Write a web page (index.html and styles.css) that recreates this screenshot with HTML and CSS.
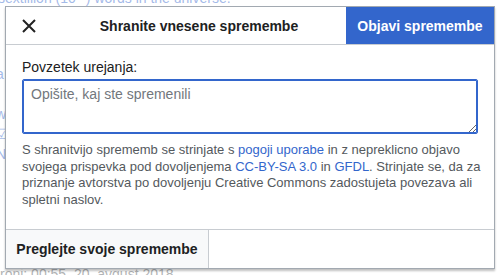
FILE: index.html
```html
<!DOCTYPE html>
<html lang="sl">
<head>
  <meta charset="UTF-8">
  <title>Shranite vnesene spremembe</title>
  <link rel="stylesheet" href="styles.css">
</head>
<body>
  <div class="stran">
    <p class="vrh">sextillion (10<sup>21</sup>) words in the universe.<sup>[ a ]</sup></p>
    <p class="levo">a<br>t<br>w<br>&#9745;<br>N</p>
    <p class="dno">roni: 00:55, 20. avgust 2018</p>
  </div>
  <div class="zavesa"></div>

  <div class="okno">
    <div class="glava">
      <button class="zapri" aria-label="Zapri">
        <svg width="14" height="14" viewBox="0 0 14 14"><path d="M1 1 L13 13 M13 1 L1 13" stroke="#222" stroke-width="2" fill="none"/></svg>
      </button>
      <div class="naslov">Shranite vnesene spremembe</div>
      <button class="objavi">Objavi spremembe</button>
    </div>

    <div class="vsebina">
      <label class="oznaka" for="povzetek">Povzetek urejanja:</label>
      <textarea id="povzetek" class="povzetek" placeholder="Opišite, kaj ste spremenili"></textarea>
      <p class="pogoji">S shranitvijo sprememb se strinjate s <a href="#">pogoji uporabe</a> in z nepreklicno objavo svojega prispevka pod dovoljenjema <a href="#">CC-BY-SA 3.0</a> in <a href="#">GFDL</a>. Strinjate se, da za priznanje avtorstva po dovoljenju Creative Commons zadostujeta povezava ali spletni naslov.</p>
    </div>

    <div class="noga">
      <button class="preglej">Preglejte svoje spremembe</button>
    </div>
  </div>
</body>
</html>
```

FILE: styles.css
```css
body {
  margin: 0;
  font-family: "Liberation Sans", Arial, sans-serif;
  background-color: white;
  width: 500px;
  height: 275px;
  overflow: hidden;
}
.stran {
  color: #202122;
  font-size: 14px;
}
.stran p {
  margin: 0;
  position: absolute;
}
.vrh {
  top: -11px;
  left: -2px;
  color: #3366cc;
}
.vrh sup {
  font-size: 9px;
}
.levo {
  top: 64px;
  left: -4px;
  line-height: 20px;
  color: #3366cc;
}
.dno {
  top: 266px;
  left: 0;
  color: #54595d;
}
.zavesa {
  position: absolute;
  inset: 0;
  background-color: rgba(255,255,255,0.55);
}
.okno {
  position: absolute;
  top: 6px;
  left: 5px;
  width: 488px;
  height: 261px;
  background-color: white;
  border: 1px solid #a2a9b1;
  box-shadow: 0 2px 2px 0 rgba(0,0,0,0.25);
  display: flex;
  flex-direction: column;
}
.glava {
  display: flex;
  align-items: stretch;
  height: 37px;
  border-bottom: 1px solid #c8ccd1;
}
.zapri {
  width: 46px;
  border: none;
  background: none;
  padding: 0;
  display: flex;
  align-items: center;
  justify-content: center;
  cursor: pointer;
}
.naslov {
  flex: 1;
  display: flex;
  align-items: center;
  justify-content: center;
  font-weight: bold;
  font-size: 14px;
  color: #202122;
}
.objavi {
  width: 148px;
  border: none;
  background-color: #3366cc;
  color: white;
  font-family: "Liberation Sans", Arial, sans-serif;
  font-weight: bold;
  font-size: 14px;
  cursor: pointer;
}
.vsebina {
  flex: 1;
  padding: 14px 16px 0 16px;
}
.oznaka {
  display: block;
  font-size: 14px;
  color: #202122;
  margin-bottom: 4px;
}
.povzetek {
  display: block;
  box-sizing: border-box;
  width: 456px;
  height: 55px;
  border: 1px solid #3366cc;
  box-shadow: inset 0 0 0 1px #3366cc;
  border-radius: 2px;
  padding: 6px 8px;
  font-family: "Liberation Sans", Arial, sans-serif;
  font-size: 14px;
  outline: none;
}
.povzetek::placeholder {
  color: #72777d;
}
.pogoji {
  margin: 8px -8px 0 0;
  font-size: 13px;
  line-height: 16.5px;
  color: #54595d;
}
.pogoji a {
  color: #3366cc;
  text-decoration: none;
}
.noga {
  height: 38px;
  border-top: 1px solid #c8ccd1;
  display: flex;
}
.preglej {
  width: 203px;
  border: none;
  border-right: 1px solid #c8ccd1;
  background-color: #f8f9fa;
  font-family: "Liberation Sans", Arial, sans-serif;
  font-weight: bold;
  font-size: 14px;
  color: #202122;
  cursor: pointer;
}
```
